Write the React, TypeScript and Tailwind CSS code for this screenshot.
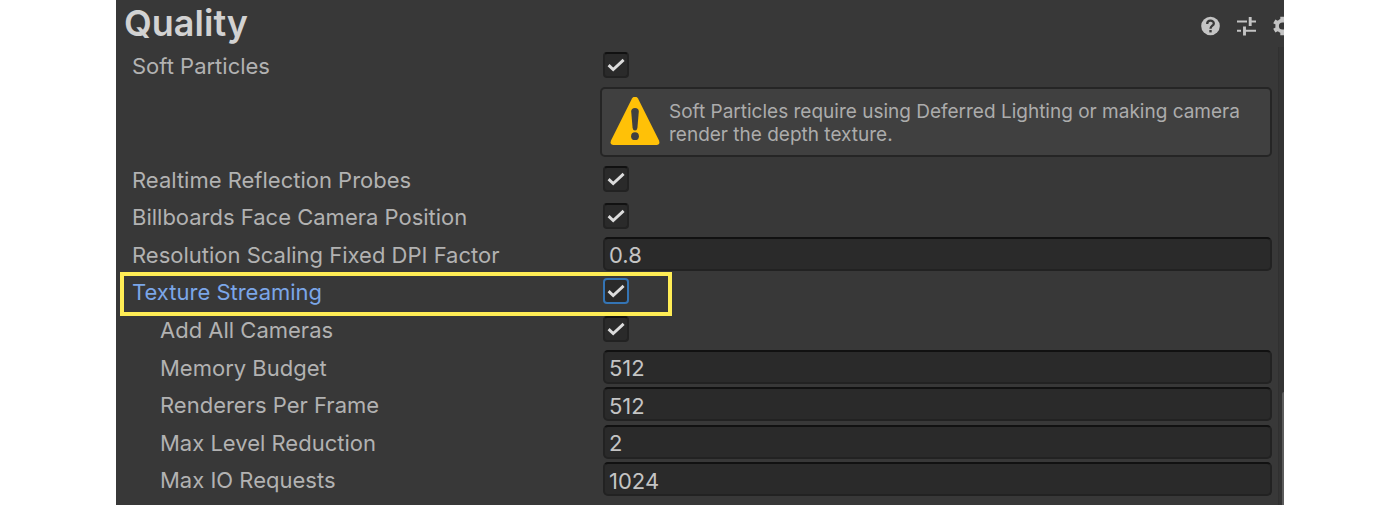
import { useState } from "react";
import type { ReactNode } from "react";

type RowProps = {
  id: string;
  label: string;
  nested?: boolean;
  active?: boolean;
  children: ReactNode;
};

function Row({ id, label, nested, active, children }: RowProps) {
  return (
    <div className="relative flex min-h-0 items-center">
      <label
        htmlFor={id}
        className={`w-[487px] shrink-0 leading-7 whitespace-nowrap ${nested ? "pl-11" : "pl-4"} ${active ? "text-[#7ba6e8]" : "text-[#b2b2b2]"}`}
      >
        {label}
      </label>
      {children}
      {active && (
        <div className="pointer-events-none absolute -top-[2px] -bottom-[5px] left-1 w-[552px] border-4 border-[#ffed55]" />
      )}
    </div>
  );
}

function Check({ id, active }: { id: string; active?: boolean }) {
  const [checked, setChecked] = useState(true);
  return (
    <span className="relative mb-[2px] block size-[26px] shrink-0">
      <input
        id={id}
        type="checkbox"
        checked={checked}
        onChange={(e) => setChecked(e.target.checked)}
        className={`block size-full appearance-none rounded-[4px] bg-[#2a2a2a] outline-none ${active ? "border-2 border-[#3474b4]" : "border-2 border-[#222222] border-t-[#111111]"}`}
      />
      {checked && (
        <svg viewBox="0 0 27 27" className="pointer-events-none absolute inset-0 size-full" fill="none">
          <path d="M5.8 13.6 L10.6 18.2 L21.4 8.2" stroke="#dcdcdc" strokeWidth="3" />
        </svg>
      )}
    </span>
  );
}

function Field({ id, value }: { id: string; value: string }) {
  return (
    <input
      id={id}
      type="text"
      defaultValue={value}
      className="mr-[6px] mb-[2px] h-[34px] min-w-0 flex-1 rounded-[5px] border-2 border-[#222222] border-t-[#111111] bg-[#2a2a2a] px-1 pt-[3px] text-[#c4c4c4] outline-none"
    />
  );
}

function WarningIcon() {
  return (
    <svg viewBox="0 0 50 50" className="size-[50px] shrink-0" aria-hidden="true">
      <path
        d="M22 1.5 Q25 -2.3 28 1.5 L49 43.5 Q50.5 48 46.5 48 H3.5 Q-.5 48 1 43.5 Z"
        fill="#ffc107"
      />
      <path d="M21.2 14.5 Q21.2 11 25 11 Q28.8 11 28.8 14.5 L27.4 31 Q27 33.5 25 33.5 Q23 33.5 22.6 31 Z" fill="#404040" />
      <circle cx="25" cy="39.2" r="3.9" fill="#404040" />
    </svg>
  );
}

export default function App() {
  return (
    <div className="bg-white px-[116px] font-['Inter','Liberation_Sans',sans-serif] text-[22px]">
      <main className="flex flex-col bg-[#383838] pb-[6px]">
        <header className="flex h-[47px] items-center justify-between">
          <h1 className="pl-2 text-[36px] leading-[47px] font-semibold text-[#d2d2d2]">Quality</h1>
          <div className="flex items-center gap-4 overflow-hidden pt-[5px]">
            <button aria-label="Help" className="size-5">
              <svg viewBox="0 0 20 20" className="size-5">
                <circle cx="10.5" cy="10" r="9.3" fill="#c4c4c4" />
                <path d="M7.2 7.9 C7.2 3.7 13.8 3.8 13.8 7.4 C13.8 9.8 10.5 9.7 10.5 12.8" fill="none" stroke="#383838" strokeWidth="2.3" />
                <rect x="9.3" y="14" width="2.4" height="2.4" fill="#383838" />
              </svg>
            </button>
            <button aria-label="Presets" className="size-5">
              <svg viewBox="0 0 20 20" className="size-5" fill="none" stroke="#c4c4c4">
                <path d="M1 5.5 H11 M14 5.5 H20 M1 14.8 H5 M9 14.8 H20" strokeWidth="1.9" />
                <path d="M14.2 1 V10 M8.5 10.5 V19.5" strokeWidth="2.9" />
              </svg>
            </button>
            <button aria-label="Settings" className="-mr-2 size-5">
              <svg viewBox="0 0 20 20" className="size-5" fill="none" stroke="#c4c4c4">
                <circle cx="10.5" cy="10" r="5.4" strokeWidth="3.6" />
                <path
                  d="M10.5 .8 V4 M10.5 16 V19.2 M2.3 5.4 L5.5 7.2 M15.5 12.8 L18.7 14.6 M2.3 14.6 L5.5 12.8 M15.5 7.2 L18.7 5.4"
                  strokeWidth="4.4"
                />
              </svg>
            </button>
          </div>
        </header>

        <div className="flex">
          <form className="min-w-0 flex-1" onSubmit={(e) => e.preventDefault()}>
            <div className="mb-[2px] grid h-[38px]">
              <Row id="soft" label="Soft Particles">
                <Check id="soft" />
              </Row>
            </div>
            <div
              role="note"
              className="mr-[6px] mb-1 ml-[484px] flex h-[70px] items-center gap-[9px] rounded-[5px] border-2 border-[#252525] bg-[#404040] pl-2 text-[19px] leading-[23px] text-[#acacac]"
            >
              <WarningIcon />
              <p className="pt-[2px]">
                Soft Particles require using Deferred Lighting or making camera
                <br />
                render the depth texture.
              </p>
            </div>
            <div className="grid h-[338px] auto-rows-fr">
              <Row id="probes" label="Realtime Reflection Probes">
                <Check id="probes" />
              </Row>
              <Row id="billboards" label="Billboards Face Camera Position">
                <Check id="billboards" />
              </Row>
              <Row id="dpi" label="Resolution Scaling Fixed DPI Factor">
                <Field id="dpi" value="0.8" />
              </Row>
              <Row id="streaming" label="Texture Streaming" active>
                <Check id="streaming" active />
              </Row>
              <Row id="cameras" label="Add All Cameras" nested>
                <Check id="cameras" />
              </Row>
              <Row id="memory" label="Memory Budget" nested>
                <Field id="memory" value="512" />
              </Row>
              <Row id="renderers" label="Renderers Per Frame" nested>
                <Field id="renderers" value="512" />
              </Row>
              <Row id="reduction" label="Max Level Reduction" nested>
                <Field id="reduction" value="2" />
              </Row>
              <Row id="requests" label="Max IO Requests" nested>
                <Field id="requests" value="1024" />
              </Row>
            </div>
          </form>
          <div className="-mb-[6px] flex w-[6px] flex-col justify-end border-l border-[#303030] bg-[#343434] pl-[3px]">
            <div className="h-[113px] rounded-tl-[2px] bg-[#5c5c5c]" />
          </div>
        </div>
      </main>
    </div>
  );
}
